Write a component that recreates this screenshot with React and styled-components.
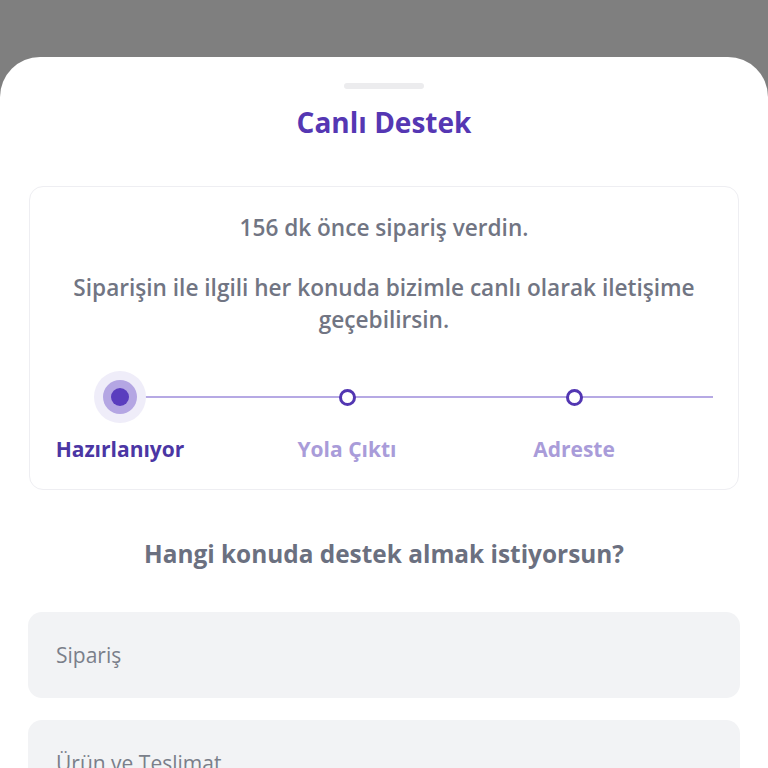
import React from "react";
import styled, { createGlobalStyle } from "styled-components";

const steps = [
  { label: "Hazırlanıyor", active: true },
  { label: "Yola Çıktı", active: false },
  { label: "Adreste", active: false },
];

const topics = ["Sipariş", "Ürün ve Teslimat"];

function App() {
  return (
    <>
      <GlobalStyle />
      <Backdrop>
        <Sheet>
          <Handle />
          <Title>Canlı Destek</Title>

          <Card>
            <Lead>156 dk önce sipariş verdin.</Lead>
            <Info>
              Siparişin ile ilgili her konuda bizimle canlı olarak iletişime
              geçebilirsin.
            </Info>
            <Track>
              <TrackLine />
              <Steps>
                {steps.map((step) => (
                  <Step key={step.label}>
                    <DotBox>
                      {step.active ? (
                        <Halo>
                          <Ring>
                            <Core />
                          </Ring>
                        </Halo>
                      ) : (
                        <Hollow />
                      )}
                    </DotBox>
                    <StepLabel active={step.active}>{step.label}</StepLabel>
                  </Step>
                ))}
              </Steps>
            </Track>
          </Card>

          <Question>Hangi konuda destek almak istiyorsun?</Question>

          <Options>
            {topics.map((t) => (
              <Option key={t}>{t}</Option>
            ))}
          </Options>
        </Sheet>
      </Backdrop>
    </>
  );
}

export default App;

const GlobalStyle = createGlobalStyle`
  html, body {
    margin: 0;
    padding: 0;
    height: 100%;
    overflow: hidden;
  }
  body {
    font-family: "Open Sans", "Noto Sans", sans-serif;
    background: #7f7f7f;
  }
  #root {
    height: 100%;
  }
`;

const Backdrop = styled.div`
  height: 100%;
  background: #7f7f7f;
  padding-top: 57px;
  box-sizing: border-box;
`;

const Sheet = styled.div`
  background: #ffffff;
  border-radius: 40px 40px 0 0;
  min-height: 100%;
  padding: 26px 28px 0;
  box-sizing: border-box;
  display: flex;
  flex-direction: column;
`;

const Handle = styled.div`
  width: 80px;
  height: 6px;
  border-radius: 3px;
  background: #ececee;
  align-self: center;
`;

const Title = styled.h1`
  margin: 17px 0 0;
  text-align: center;
  font-size: 28px;
  line-height: 32px;
  font-weight: 700;
  color: #5537b3;
`;

const Card = styled.div`
  margin-top: 48px;
  margin-left: 1px;
  margin-right: 1px;
  border: 1px solid #eeeef2;
  border-radius: 14px;
  padding: 25px 0 26px;
  display: flex;
  flex-direction: column;
  align-items: stretch;
`;

const Lead = styled.p`
  margin: 0;
  text-align: center;
  font-size: 22.6px;
  line-height: 32px;
  font-weight: 600;
  color: #717583;
`;

const Info = styled.p`
  margin: 28px 24px 0;
  text-align: center;
  font-size: 22.6px;
  line-height: 32px;
  font-weight: 600;
  color: #717583;
`;

const Track = styled.div`
  position: relative;
  margin-top: 35px;
`;

const TrackLine = styled.div`
  position: absolute;
  left: 90px;
  right: 25px;
  top: 25px;
  height: 2px;
  background: #b6a9e4;
`;

const Steps = styled.div`
  position: relative;
  display: grid;
  grid-template-columns: repeat(3, 180px);
  column-gap: 47px;
`;

const Step = styled.div`
  display: flex;
  flex-direction: column;
  align-items: center;
  gap: 12px;
`;

const DotBox = styled.div`
  width: 52px;
  height: 52px;
  display: flex;
  align-items: center;
  justify-content: center;
`;

const Halo = styled.div`
  width: 52px;
  height: 52px;
  border-radius: 50%;
  background: #efedf9;
  display: flex;
  align-items: center;
  justify-content: center;
`;

const Ring = styled.div`
  width: 34px;
  height: 34px;
  border-radius: 50%;
  background: #b4a6e3;
  display: flex;
  align-items: center;
  justify-content: center;
`;

const Core = styled.div`
  width: 18px;
  height: 18px;
  border-radius: 50%;
  background: #5a3dbe;
`;

const Hollow = styled.div`
  width: 11px;
  height: 11px;
  border-radius: 50%;
  border: 3px solid #5236b2;
  background: #ffffff;
`;

const StepLabel = styled.span`
  font-size: 21px;
  line-height: 28px;
  font-weight: 700;
  color: ${(p) => (p.active ? "#4b36a4" : "#a99cd9")};
  white-space: nowrap;
`;

const Question = styled.h2`
  margin: 48px 0 0;
  text-align: center;
  font-size: 24.4px;
  line-height: 32px;
  font-weight: 700;
  color: #6b7080;
`;

const Options = styled.div`
  margin-top: 42px;
  display: flex;
  flex-direction: column;
  gap: 22px;
`;

const Option = styled.div`
  height: 86px;
  border-radius: 14px;
  background: #f2f3f5;
  padding: 0 28px;
  display: flex;
  align-items: center;
  font-size: 21px;
  color: #7a7f8a;
`;
